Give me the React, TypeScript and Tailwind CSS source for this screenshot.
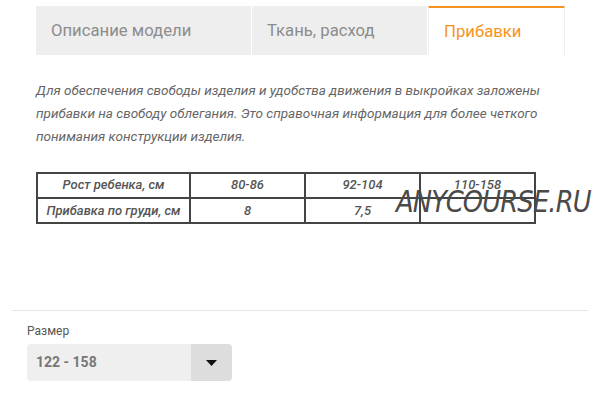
import React from "react";

export default function App() {
  return (
    <div className="relative w-[600px] h-[400px] bg-white overflow-hidden font-[Roboto,'Liberation_Sans',sans-serif]">
      <div className="pl-[36px] pt-[6px]">
        <div className="flex h-[49px]">
          <div className="w-[215px] bg-[#eeeeee] flex items-center pl-[15px] pt-[1px] text-[16.7px] text-[#8c8c8c]">
            Описание модели
          </div>
          <div className="w-[175px] ml-[1px] bg-[#eeeeee] flex items-center pl-[15px] pt-[1px] text-[16.7px] text-[#8c8c8c]">
            Ткань, расход
          </div>
          <div className="w-[137px] ml-[1px] bg-white border-t-2 border-[#f7931e] border-x border-x-[#eeeeee] flex items-center pl-[15px] pt-[1px] text-[16.7px] text-[#f7931e]">
            Прибавки
          </div>
        </div>
        <p className="mt-[24px] text-[13.5px] leading-[23px] italic text-[#666666]">
          Для обеспечения свободы изделия и удобства движения в выкройках заложены
          <br />
          прибавки на свободу облегания. Это справочная информация для более четкого
          <br />
          понимания конструкции изделия.
        </p>
        <table className="mt-[24px] w-[498px] border-collapse border-2 border-[#444444] text-[13px] italic font-medium text-[#555555] table-fixed">
          <tbody>
            <tr className="h-[25px]">
              <td className="w-[153px] border-2 border-[#444444] text-center p-0 pb-[2px]">Рост ребенка, см</td>
              <td className="w-[115px] border-2 border-[#444444] text-center p-0 pb-[2px]">80-86</td>
              <td className="w-[115px] border-2 border-[#444444] text-center p-0 pb-[2px]">92-104</td>
              <td className="w-[115px] border-2 border-[#444444] text-center p-0 pb-[2px]">110-158</td>
            </tr>
            <tr className="h-[25px]">
              <td className="border-2 border-[#444444] text-center p-0 whitespace-nowrap">Прибавка по груди, см</td>
              <td className="border-2 border-[#444444] text-center p-0">8</td>
              <td className="border-2 border-[#444444] text-center p-0">7,5</td>
              <td className="border-2 border-[#444444] text-center p-0"></td>
            </tr>
          </tbody>
        </table>
      </div>
      <div className="mx-[12px] mt-[86px] border-t border-[#e5e5e5]" />
      <div className="pl-[27px] pt-[12px]">
        <div className="text-[12px] leading-[16px] text-[#555555]">Размер</div>
        <div className="mt-[5px] w-[205px] h-[37px] flex rounded-[4px] overflow-hidden bg-[#efefef]">
          <div className="flex-1 flex items-center pl-[9px] text-[14px] font-bold text-[#777777]">122 - 158</div>
          <div className="w-[41px] bg-[#dddddd] flex items-center justify-center">
            <svg width="11" height="6" viewBox="0 0 11 6">
              <path d="M0 0 L11 0 L5.5 6 Z" fill="#111" />
            </svg>
          </div>
        </div>
      </div>
      <div className="absolute left-[396px] top-[187px] text-[30px] italic font-light text-[#4a4a4a] tracking-[-1px] leading-none whitespace-nowrap font-['DejaVu_Sans',sans-serif] scale-x-[0.86] origin-left">
        ANYCOURSE.RU
      </div>
    </div>
  );
}
